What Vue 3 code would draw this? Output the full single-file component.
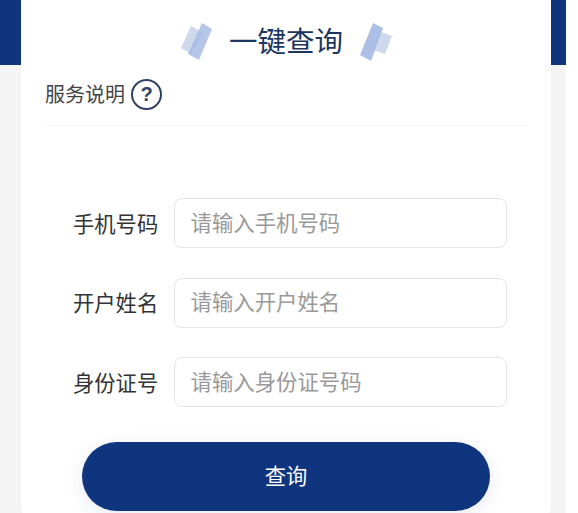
<template>
  <div class="page">
    <div class="banner"></div>
    <div class="card">
      <div class="title-row">
        <svg class="deco" viewBox="0 0 32 38" width="32" height="38">
          <polygon points="11,3 24,10 11,31 1,25" fill="#c3cfe9" fill-opacity="0.8" />
          <polygon points="22,0 32,6 19,37 8,31" fill="#a3b8e4" fill-opacity="0.8" />
        </svg>
        <h1>一键查询</h1>
        <svg class="deco" viewBox="0 0 32 38" width="32" height="38">
          <polygon points="21,9 32,13 25,31 12,27" fill="#c3cfe9" fill-opacity="0.8" />
          <polygon points="13,0 23,5 11,38 0,32" fill="#a3b8e4" fill-opacity="0.9" />
        </svg>
      </div>
      <div class="service">
        <span class="service-text">服务说明</span>
        <span class="help">?</span>
      </div>
      <form class="form" @submit.prevent>
        <div v-for="field in fields" :key="field.label" class="row">
          <label>{{ field.label }}</label>
          <input type="text" :placeholder="field.placeholder" />
        </div>
        <button type="submit">查询</button>
      </form>
    </div>
  </div>
</template>

<script setup>
const fields = [
  { label: '手机号码', placeholder: '请输入手机号码' },
  { label: '开户姓名', placeholder: '请输入开户姓名' },
  { label: '身份证号', placeholder: '请输入身份证号码' },
];
</script>

<style>
html,
body {
  background: #fff;
  overflow: hidden;
}
</style>

<style scoped>
.page {
  width: 566px;
  height: 513px;
  background: #f4f4f5;
  overflow: hidden;
  font-family: 'Liberation Sans', 'Noto Sans CJK SC', sans-serif;
}
.banner {
  height: 65px;
  background: #10357f;
}
.card {
  position: relative;
  margin: -85px 15px 0 21px;
  height: 540px;
  padding: 20px 23px 0;
  box-sizing: border-box;
  background: #fff;
  border-radius: 14px;
}
.title-row {
  display: flex;
  align-items: center;
  justify-content: center;
  gap: 17px;
  height: 40px;
  margin-top: 20px;
  padding-top: 2px;
}
.title-row h1 {
  margin: 0;
  font-size: 28.5px;
  font-weight: 400;
  line-height: 40px;
  color: #1c3560;
}
.service {
  display: flex;
  align-items: center;
  gap: 6px;
  height: 31px;
  margin-top: 17px;
  padding-bottom: 15px;
  border-bottom: 1px solid #f6f6f6;
  font-size: 20px;
  color: #444;
}
.service-text {
  margin-left: 1px;
  padding-bottom: 2px;
}
.help {
  width: 31px;
  height: 31px;
  box-sizing: border-box;
  border: 2px solid #2f4266;
  border-radius: 50%;
  display: flex;
  align-items: center;
  justify-content: center;
  font-size: 20px;
  font-weight: 700;
  color: #2f4266;
}
.form {
  margin-top: 72px;
}
.row {
  display: flex;
  align-items: center;
  gap: 16px;
  height: 50px;
  margin-bottom: 29.5px;
  padding-left: 29px;
}
.row label {
  width: 85px;
  font-size: 21.3px;
  color: #333;
  white-space: nowrap;
  padding-bottom: 2px;
}
.row input {
  width: 332.5px;
  height: 50px;
  box-sizing: border-box;
  padding: 2px 15.5px 0;
  border: 1.5px solid #e6e6e6;
  border-radius: 8px;
  outline: none;
  background: #fff;
  font-family: inherit;
  font-size: 21.4px;
  color: #333;
}
.row input::placeholder {
  color: #999;
}
button {
  display: block;
  width: 408px;
  height: 69px;
  margin: 35px 0 0 38px;
  padding: 0 0 4px;
  border: none;
  border-radius: 35px;
  background: #10357f;
  box-shadow: 0 4px 18px rgba(16, 53, 127, 0.1);
  font-family: inherit;
  font-size: 21.3px;
  color: #fff;
}
</style>
